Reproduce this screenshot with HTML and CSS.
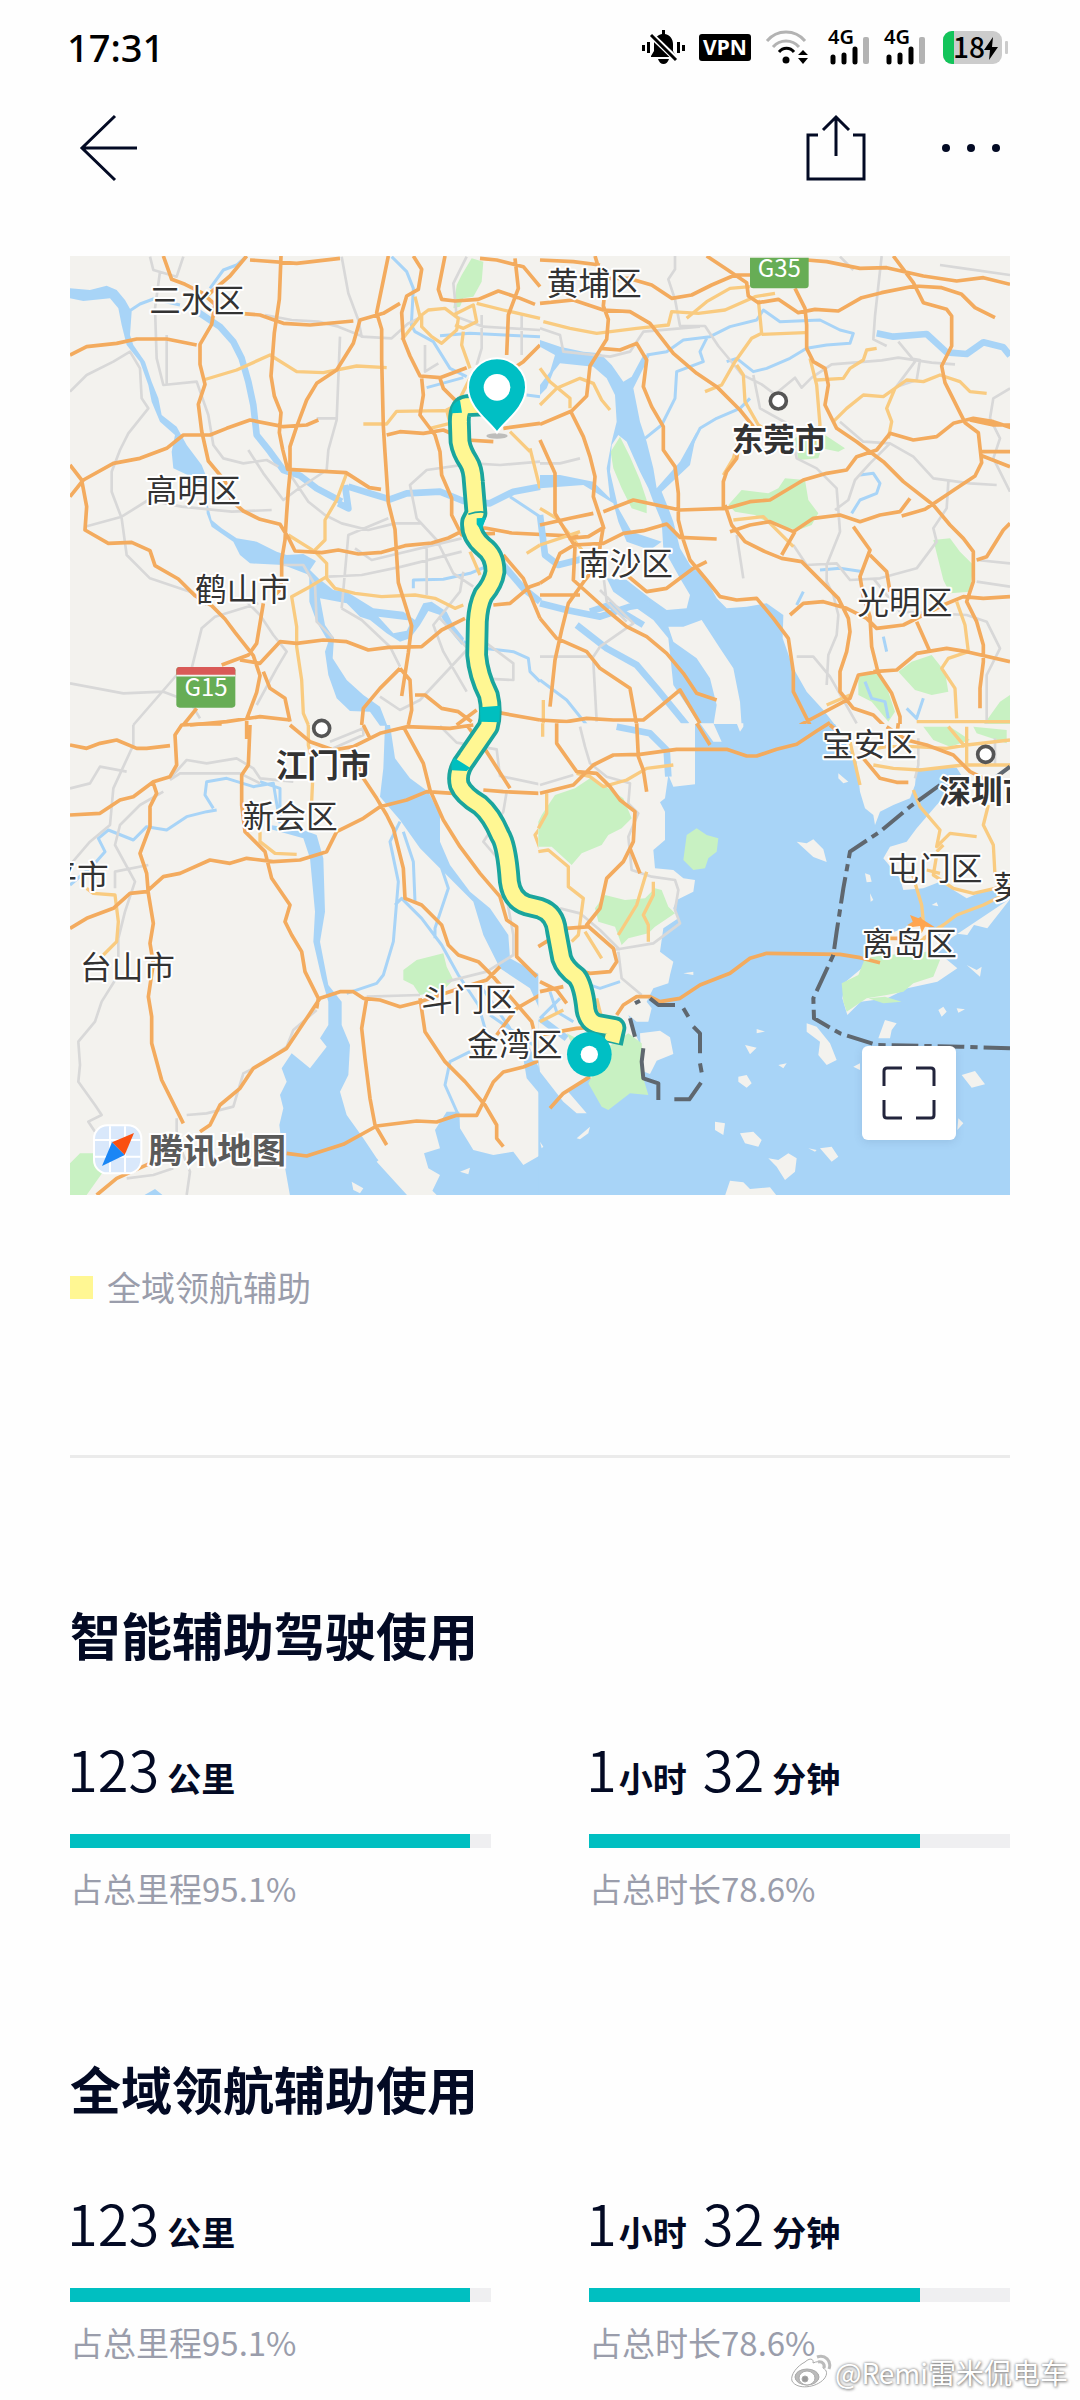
FILE: index.html
```html
<!DOCTYPE html>
<html lang="zh-CN">
<head>
<meta charset="utf-8">
<meta name="viewport" content="width=device-width, initial-scale=1">
<title>智能辅助驾驶使用</title>
<link rel="stylesheet" href="styles.css">
</head>
<body>
<div class="page">
  <div class="status">
    <span class="status-time">17:31</span>
    <div class="status-icons">
      <svg width="44" height="36" viewBox="0 0 44 36" aria-hidden="true">
        <g fill="#000"><path d="M21 1h3v4c5 1 8 5 8 10v7l3 5v1H10v-1l3-5v-7c0-5 3-9 8-10z"/><path d="M17 30h11c-1 3-3 5-5.500 5S18 33 17 30z"/></g>
        <path d="M9 5l27 26" stroke="#fff" stroke-width="6"/>
        <path d="M10 6l25 25" stroke="#000" stroke-width="3"/>
        <path d="M2.500 16v6M7.500 13v11M37.500 13v11M42.500 16v6" stroke="#000" stroke-width="3"/>
      </svg>
      <svg width="52" height="36" viewBox="0 0 52 36" aria-label="VPN"><rect y="5" width="52" height="27" rx="3"/><text x="26" y="26" class="vpn">VPN</text></svg>
      <svg width="49" height="36" viewBox="0 0 49 36" aria-hidden="true" fill="none" stroke-width="3">
        <path d="M2 12c10-12 28-12 38 0M8 18c7-8 19-8 26 0" stroke="#b3b3b3"/><path d="M14 23c4-5 11-5 15 0" stroke="#000"/>
        <circle cx="21" cy="31" r="3.500" fill="#000"/><path d="M38 21l5 5H33zM38 35l5-6H33z" fill="#000"/>
      </svg>
      <svg width="42" height="36" viewBox="0 0 42 36" aria-label="4G"><text x="0" y="15" class="net">4G</text><path d="M5 28v5M16 26v7M27 20v13" stroke="#000" stroke-width="5" stroke-linecap="round"/><rect x="35" y="8" width="6" height="27" rx="2" fill="#b3b3b3"/></svg>
      <svg width="42" height="36" viewBox="0 0 42 36" aria-label="4G"><text x="0" y="15" class="net">4G</text><path d="M5 28v5M16 26v7M27 20v13" stroke="#000" stroke-width="5" stroke-linecap="round"/><rect x="35" y="8" width="6" height="27" rx="2" fill="#b3b3b3"/></svg>
      <svg width="68" height="36" viewBox="0 0 68 36" aria-label="18%">
        <rect x="3" y="2" width="59" height="33" rx="9" fill="#ccc"/><path d="M14 2h-2a9 9 0 0 0-9 9v15a9 9 0 0 0 9 9h2z" fill="#13c45a"/>
        <rect x="65" y="12" width="3" height="13" rx="1" fill="#ccc"/><text x="13" y="29" class="battery">18</text><path d="M53 8l-9 13h6l-1 10 9-13h-6z"/>
      </svg>
    </div>
  </div>

  <header class="topbar">
    <button class="icon-button" type="button" aria-label="返回">
      <svg width="60" height="70" viewBox="0 0 60 70" fill="none" stroke="#030a24" stroke-width="3"><path d="M36 3L3 35l33 32M3 35h55"/></svg>
    </button>
    <div class="topbar-actions">
      <button class="icon-button" type="button" aria-label="分享">
        <svg width="62" height="70" viewBox="0 0 62 70" fill="none" stroke="#030a24" stroke-width="3"><path d="M13 22H3v44h56V22H48M31 43V4M18 17L31 4l13 13"/></svg>
      </button>
      <button class="icon-button" type="button" aria-label="更多">
        <svg width="62" height="70" viewBox="0 0 62 70" fill="#030a24"><circle cx="6" cy="35" r="4"/><circle cx="31" cy="35" r="4"/><circle cx="56" cy="35" r="4"/></svg>
      </button>
    </div>
  </header>

  <main>
    <div class="map">
      <svg class="map-canvas" viewBox="0 3 2820 2817" role="img" aria-label="行程路线地图">
        <rect width="2820" height="2820" class="land"/>

        <!-- north-west -->
        <g>
          <path class="water" d="M0 100L60 105 110 92 140 105 165 135 185 170 180 240 190 270 225 320 245 380 265 430 275 480 320 515 350 570 395 630 415 680 412 745 425 795 455 820 500 850 560 860 620 890 650 900 700 897 738 918 720 945 745 970 790 1005 830 1010 870 1035 910 1060 1000 1070 1035 1095 1060 1045 1085 1040 1130 1070 1150 1110 1182 1150 1175 1170 1150 1140 1110 1080 1075 1068 1050 1110 1020 1150 990 1160 950 1135 900 1095 870 1085 830 1045 750 1030 765 1110 792 1150 788 1210 830 1275 880 1320 930 1355 952 1412H930L900 1370 840 1368 800 1330 775 1260 765 1190 775 1160 740 1100 718 1040V960L640 930 540 925 510 900 490 860 425 815 410 775 408 700 370 668 310 640 305 590 315 540 270 500 245 440 235 390 210 320 170 270 155 210 145 160 120 130 40 138 0 130z"/>
          <path class="land" d="M925 1085l100 12-15 30-40 8z"/>
          <path class="river r12" d="M175 170L210 147 250 132 330 150M530 3L500 30 460 45 420 100M965 5l45 45 20 50-6 110 11 20 55 30 50 80 50 25M1110 242l90-7 210 10M1030 1000v-25l90-2 80-18 60-25M1180 1160l60 20 90 10 45 20 5 40 30 30M1070 398l110-30M1370 420l40 5M1320 725l90 60"/>
          <path class="river r22" d="M385 172L450 215 490 260 515 310 535 380 550 450 560 540 600 590 640 645 690 662 740 700 815 740M835 695l65 20 60 18 50-18 100-5 70 28 80 7 70-35 80-15M1300 930l60 70 50 40M825 690l10 70-30-15"/>
          <path class="park" d="M1205 10l35 10-5 60-25 45-30 5-10 25-20 5 10-70 15-30z"/>
          <path class="minor" d="M240 5l10 40 70 20 20-60M270 50l-15 110 5 150 20 80 100-10 35 100 15 90 30 40 60 15 70-10 35 20M290 240v150M0 410l50-50 80-40 50-30 30 50 5 90 20 30-60 75-25 50-25 65v60l30 80 15 110 70 70 120 40 50 40M45 815l110-30 80-50 100 20 150 15 120-5M815 5l20 110 30 80 10 50 90 5 50-45 40-20M880 245l-75-30-60-15-80-5-80-15M810 245l-10 250-25 90-5 60-90 60-40 30-60-80-45-70M740 490h60M655 650l60 90 50 40 50 25 80 20 80-20h80M1190 5l-40 80 10 100 80 30 170 10M1235 180v100l-15 50M1355 180v120M1065 270v80l40-25M1410 620l-120 10-80-5-140 20-50 45 20 100 60 65 50 100 60 40M815 1060l20-220 120-50M815 1060l60 35 85 80 30 60M855 880l50 35 270-65M775 965l100-5 120-25 180-45M640 930h60l35 60 5 110 50 50M520 1030l50 50 40 60 40 50-30 50-60 110M365 1240l30-120 40-35 130-40M0 1285l160 30 120-5 80 30 30 50M430 1240l-110 20-130 150M930 1325l60 40 60-30 140-150 60-20 80 60v50l-100-5M1110 1090l110 120M1070 880v140M1180 950l-10 60-80 100 30 80 70 120"/>
          <path class="second" d="M400 375l100-30 100-45 80 50 80 3 100-20 90 5M880 507h70l30-38 140-2 80 10M655 840l80 50 35 35v45l25 30 60 15 80 10 100-5 60 10 60 30 25-10M830 655l-30 80-35 60v60l-30 30M770 965l-50 30-55 30 15 90v60l15 100 5 100 15 35M1055 180l20-15 50-5 40 30-5 35-45 40-30-20-30-30zM1150 180l60-30 10 50-40 20-25-10M1180 230l-5 40 25 70M1220 145l80 20 110 25M1035 125l15 60-55 70M1410 870l-40 25M1380 580l30 120M1320 530l60 60M1200 370l-40 80-30 15 10 40-60 15M1200 890l30 70"/>
          <path class="major" d="M280 3l25 70 40 15 50 25 40 35-10 60-35 60v60l15 60-20 60 10 80 20 90 50 60 20 60 35 30 50 25 60 15 25 40 20 40 80 5 50-8 60 12 70-5 70-20 80-8 50-15 50-25 60-5 80 15 200 10M0 300l50-25 90-10 60-13h90l90 18M530 3l-50 60-70 60M540 15l140 10 130-15M633 3l-5 130-15 100-10 130 10 60 20 50-5 60 10 50 15 60 175 10 70 45 35 5M510 175l60 5 70 25 80 5 130-12M955 3l-35 170 15 50v90l5 200 5 80 10 150 20 80 10 160 25 80 15 50-10 80-20 130M990 145l-50 30-70 20-20 70-50 80-60 40-30 50-30 80-20 60v80l-5 50-5 70-5 80-10 60v60l-5 30-20 20M0 725l40-50 90-50 80-15 80-30 50-40h80l50-20 70-25 100 20 70-5 35-15M0 630l35 45 15 80-5 70 70 40 70-3 55 25 15 45 70 40 50 50 50 30 40 40 30 40 55 70 20 60-10 50-30 80v60M455 1230l80-30 25-35 20-120M510 1215l60 10 60-65 50 5 80-10 70 5 65 25 60-8 100-2 60-50 70-35M360 1410l110-10 100-15 90 10M580 1250l20 50 45 30 15 70M340 1410l40-50M1030 3l25 40-10 60-35 20-15 50 5 80 20 50 30 60 60 5 80-30M1125 3l-20 100 10 30 40 5 70-5 60-25 60 20 50 20M1410 95l-50-60-80-20-50-5M1310 300l5-120 30-80-10-90M1410 270l-50 50-30 20M950 540l40-10 70 5 60-10 70 30 80 5M1055 370l5 50-10 60 45 60 15 50 5 70 30 70v50l30 60 100-5M1110 370l10 30 40 40M1300 520l110-15M990 1240l30 35 5 90-10 45M990 1240l-60 60-50 60-5 50M1035 1320h30l50 40 50 10 40 30M1270 1370l140 25M1160 1410l60-45M1300 900l60 70 50 120M1270 1050l50-5 60-50 30-10"/>
        </g>

        <!-- north-east -->
        <g transform="translate(1410 0)">
          <path class="water" d="M0 255L60 275 130 290 180 295 215 330 250 380 275 365 310 300 330 300 280 400 300 500 320 560 340 640 350 700 420 620 470 530 450 630 365 710 385 760 400 800 420 880 450 930 500 975 530 1030 560 1060 620 1055 680 1045 730 1080 728 1150 760 1240 800 1310 850 1365 887 1412H605L600 1340 580 1240 540 1180 485 1095 430 1115H385L400 1160 470 1210 510 1270 530 1350 520 1412H480L440 1350 400 1290 385 1150 340 1095 290 1060 220 1010 200 970 260 975 330 1030 380 1065 440 1060 450 1020 420 970 370 880 365 800 340 740 325 700 300 650 260 560 235 540 215 570 210 650 235 760 275 830 365 860 330 885 260 860 235 800 220 745 130 690 0 700V660L60 660 160 680 210 730 200 640 215 560 230 500 225 420 200 370 160 335 60 325 40 350 20 400 0 420V390L30 350 45 300 0 275z"/>
          <path class="river r12" d="M320 300l60-10 50-35 80-10 60-30 80-20 20-30 50 35 120-5 60 30 40 10-10 30-70 5-60 10-50 30-70 30-40 10-50-40-30 10M500 250l-20 40 10 30-80 30-5 80-40 80-50 40M450 580l30-60 50-30 70-30 30-30M935 775l25-40 50-20 10-30-20-30-40 5M840 945l60-5 70 10M790 1010l-20 40M0 1275l80 60 60 75"/>
          <path class="river r22" d="M1010 235l50 10 100-8 60 55 60 5 50-35 60 15 20 25M0 1045l80 20 100 20 90-30 60-10M110 1110l90 70 90 50 60 70 90 110M0 780l15 120 40 30 80-20M150 1070l60-20 100 60"/>
          <path class="park" d="M240 545l30 60 30 70 20 60v40l-45-15-30-60-25-60-8-50zM565 750l40-45 80 10 30-15 20-30 60 5 10 60 30 40-20 35-40 15-80-15-50-30-60-10zM765 550l30-20 60 10 60 40-20 10-50-10-10 30-60 5zM1180 855l50-5 30 40 40 40-10 80-60 5-20-40zM1075 1250l40-30 60-20 40 50 10 60-50 10-50-15zM955 1260l60-10 30 60 20 60-20 30-50-60-40-20zM1330 1410l50-70 30-20v90z"/>
          <path class="river r12" d="M975 1280l20 50 40 10 10 50M1030 1145l10 45M1100 1360l30 30 20-60"/>
          <path class="minor" d="M405 3v40l-20 30 20 60 15 80h75l40 60 50 60 20 25 60 30 40 30 60-50 20 30 30-30 60-40 150-12 50-8 100 15 70 5M640 360l20 100 90 50 20 100 60 30 60 60 10 130-40 100v50l20 40 15 60-5 60-25 60-5 90M0 220l60 20 10 50 140 15 60-15 40-60 170-15M1025 3l-20 180-5 70 40 20M1110 310l30 5-10 60-60 20M1075 260l50 60-60 80M900 500l70 60 80 5 70 40 60 65 110 15 80 5M1050 565l-60 60-45 50-20 60-40 30M1225 680l-5 80-40 60 10 40-60 80-110 30-90 5-40-50-90 5-40-60M1200 30l70 10 140 20M900 5l40 40M0 625h60l60-15M0 1205h160l20-30 100-70-100-100M190 960l10 80 60 60M160 1220l10 180M770 1205h50l50 60 80 140M1000 970l80 100 200 10 60 20 40 80-40 80v150M590 840l20 130M1410 400l-50 30-10 60 30 60-20 60 30 60 20 40M1310 915l100 10M1310 980l100 15"/>
          <path class="second" d="M10 200l80 20 80 15 120-15 95-10 10-40 80 5 80-10 90-40 60-10M440 190l60-50 70-40 60-5M655 135l10 100-30 15-50 70-40 70-50 20M665 238l130-5M590 330l20 30 5 80 40 70 80 50M810 310l20 80 10 120-20 60M830 375l80-5 20-30 40-25 10-30 30-5M880 500l40-40 50-40 60 5 70-50 50 5 50-20 60 20 30 30 50 5M1065 400l-25 60 15 40-10 50M0 340l30 40 60 50v30M0 450l50-50 70-30 40 15 25 50 25 30M0 870l120-40M0 760l50 30 80 100M580 795l90-10 60 60 30 30M1250 1040l25 70 10 80-60 20-20 30 40 60 5 90M860 1350l70-30M1130 1400h280M10 1335v75M550 660l30-50 20-70"/>
          <path class="major" d="M0 15l100 5 80 10M165 3l30 100-5 50 15 40-5 60-50 80-10 90-45 45-95 40M0 145l100-10 90 30 80 5 60 35 70 90 70 60 60 40 70 70 40 50M205 70h60l70 20 60 40 60-10 60-30 70-30h50M500 3l60 40 60 40 5 40 30 20 60-10 60 40 50-10 70 5 70-40 60-15 100-20 80 5 60 20 40 40 60 30M800 15l60 5 100 20 80-2 110 25 100 15 80-10 80 20M1060 3l60 80 30 60 70 20 15 20v90l-30 60 10 50 60 120 40 30 10 90-20 40-60 40-30 20-60 40-70 20M765 100l30 60 5 50v70l20 40 35 20 10 50-10 60 35 70 60 40 80 60 60 60 90 70 50 60 40 40 30 40v90l-20 60 30 60 20 70v50l-10 80v60M550 760v-80l10-30 30-40 10-60M180 280l60 5 50-20 30 50-10 80 25 60 35 60v70l35 50 10 80v80l15 60 20 60 50 60 40 50 50 10 60-5 50 60 45 60 15 100v60l50 100 60 60M0 555l45 100v120l60 100-5 100 100 90 60 50 60 30 60 50 50 60 40 60 60 20M90 465l40 80 20 60 15 60-5 60 30 90-10 60-5 50-40 50-50 70-20 80-20 90-15 140M0 810l90-20 70-15M190 770l90-35 140 30 140-5 70-20 60-5 50-30 50-30 70-20 60-10 30-40 60-20 40-50 70 20 70-10 50-40 60-15 60 10 60 20h60M555 750l20 60 40 50 60 30 50 20 60 10 60 60 50 50 30 60 5 40-10 60-20 60v60l40 50 60 20 60 60M570 830l60-20 60-10 70 30 60-40 80-10 60 20 60-20 60-10 30-40M765 830l-40 70M750 1080l40-35 60-5 70 20 60 30 30 30 80-10 60-30 60-30 60-25 60 5 80-5M940 815l50 70-30 80 10 60 20 60 5 90 20 80 40 60 25 70v25M1000 1250l70-5 60-50 90-15 60 10 130 30M1130 1100l40 90M990 900l50 50 10 60M780 1410l150-80 25-70 60-10M85 850l60-5 50-30M100 870l90-5 60-30 60-8 70-20 40 40 110 5M0 985l30-20 30-70 50-30M0 1020h120M260 960l60 50 60-10 80-60 40-20M0 1090l50 60 90 40 40 50 90 60 20 110M0 1395l80 5 60-10 80 5h90l50-40 60-50 60 100M1310 915l30-10 50-80 20-20M1320 590h90M1320 600l90 35M1290 495l70 15h50"/>
        </g>

        <!-- south-west -->
        <g transform="translate(0 1410)">
          <path class="river r12" d="M0 480l70-60 35-40-20-40 30-25 75 30 40-40 60 10 60-40 60-15 30-5M430 250l-25-40 5-40 60-10 80 25 60-10 20 120M570 170l60 20v100M990 290l-30 60 25 120-15 180-30 100-20 25-90 30M1000 320l30 90 5 120M975 540l20-20 60 60 60 80 50 90 60 90 20 70M1115 430l20 60-40 120v30M1200 980l-60 30-15 70 40 90M1260 870l130 90M1230 780l90 130"/>
          <path class="water" d="M600 300L700 315 740 330 760 400 765 560 750 650 775 780 815 830V900L840 960 835 1050 810 1100 830 1170 880 1240 920 1300 1000 1390 1020 1412H660L640 1300 628 1200 640 1150 630 1110 650 1070 635 1030 665 985 720 1030 770 965 750 940 775 900V830L755 760 730 650 735 560 720 400 700 340 600 312zM945 0h15L975 100 1020 160 1075 200 1110 270V350L1140 420 1200 500 1260 550 1315 630 1320 700 1412 750V860L1380 790 1290 730 1240 630 1210 530 1100 420 1050 370 990 285 930 215 940 130zM1062 1285L1110 1270 1095 1215 1130 1160H1168L1170 1210 1210 1275 1270 1290 1330 1280 1360 1320 1412 1290V1412H1080L1110 1350 1075 1330zM1350 940L1380 970 1412 1040V1110L1370 1060zM220 1412l35-20 25 20z"/>
          <path class="land" d="M920 1310l30-25 60 105 60-10 40 40h-90zM845 1370l35 20-10 15-20-10zM1170 1340l30-12-5 20z"/>
          <path class="park" d="M1000 735l40-30 80-20 10 40 20 40-30 30-70 15-20-30-30-15zM0 1315l30-30h60l20 40-60 85H0z"/>
          <path class="minor" d="M190 0v60l-60 130-10 110-60 50-60 70M0 190l60-15 30-50 80 15M300 160l50-55 60 10 90-15 50 30 20 30 100 10M300 165l30-20h180l60 30M280 200l-70 40-60 60-15 60 60 110-30 90-20 80v110l-50 80-20 60-50 60 5 70-5 50 50 70 20 30-40 20 20 30M135 490v-50l100-20M350 1170l60-5 80-20 30-100 60-30 70-50 20-50 70-60M320 1180v60l40 100-10 70M170 1360l80-10 60-20M890 815l160-5M1130 770l120-30 80-50v-60l-20-110M1110 3l50 50 120 20 10 80 120 25M1310 200l-10 60-60 90 60 70M780 50l100-40v20l-90 40"/>
          <path class="second" d="M715 0v60l15 60-5 110M50 490l20 15 65 5 10 80-5 60-40 40M570 320v30l45 35 65 3M1410 310l-15 20 15 40"/>
          <path class="major" d="M0 60l50 10 40-15 50-10 60 25h30l70-8M0 270l90-5 60-40 40-10 60-45 50-15 20-35-5-90 20-30 60-3h60M250 175l10 30-20 40v60l-30 80 20 60 5 60 15 90-10 60 10 60-15 100 10 60v80l30 110 65 130M0 610l50-30 80-30 50-45 50-5 50-45 50-10 90-40 60 10 50-15 80 10 80-5 80-25 30-60 80-40 50-35 80-20 60-25 80 5M540 0l-5 120-20 30v90l10 80 60 60 20 80 55 80-15 50 20 40 30 50 10 60 40 80-5 30M660 0l60 50 70 25 60-10 80-40 80-20 130 5 70-10M880 0l20 40M850 70l30 90 40 60 30 50 20 40 30 120 5 90 50 20 60 60 20 60 30 30 60 20 40 40 60 70 60 70 20 80 30 20M1000 5l60 110 20 80 40 90 50 80 60 80 60 70 20 70 30 20v90l60 60M390 1220l30-20 30-60 60-50 40-60 100-60 40-60 60-90 60-20h40l30 20 50 5 60 20 60-15 60-20 60-20 80-25 40-40M1410 810l-70 40-60 80M80 1410l60-50 100-45M650 1285l60 8 110-35 100-55 120-15 60 3 60-20h60l50-100 30-30 60-15 50-20M890 820l-15 90 10 90 15 120 15 80 35 60M1050 820l15 100 60 90 60 60 60 70 35 60v40l20 25M1190 0l60 80 70 110M1240 195l60 5 110 5"/>
        </g>

        <!-- south-east -->
        <g transform="translate(1410 1410)">
          <path class="water" d="M-5 880L100 900 180 900 480-3H1415V1415H-5V1050z"/>
          <path class="water" d="M330-3H1415V1415H330z"/>
          <path class="land" d="M-5-5H465V178L400 185 385 150 375 220 360 232 375 260V345L340 375 345 430 400 435 430 460 465 465 460 500 410 525 400 550 415 580 370 610 360 680 400 710 390 750 385 775 340 790 320 830 335 850 325 890 290 890 265 870 300 960 310 1060 200 1100 150 1060 80 1095 140 1165 110 1165 70 1130 0 1040 -5 1000z"/>
          <path class="river r22" d="M230 5l100 20 50 50 5 80M0 880l80 60"/>
          <path class="river r12" d="M0 880l60-60M30 800l20 60 50 30M120 770l60 20 60-20"/>
          <path class="land" d="M480-5l40 55h25L520-5zM590-5l10 25 10-15V-5zM885-3L920 60 950 110 960 200 975 250 1000 270 1005 300 1020 260 1060 240 1110 220 1125 180 1130 130 1250 128 1270 160 1190 240 1130 310 1100 350 1050 365 1030 400 1080 460 1090 495 1150 490 1200 470 1280 520 1350 490 1412 520V-3zM1412 520l-70 90-40-10-20 30-80-10-10 60 60 50-60 40-90 20-60 30-80 10-40 40-15-50 10-50 60-50 20-50 40-40 80-30h40l60 50z"/>
          <path class="land" d="M770 350l30 5 20-12 30 30 10 38-40-15zM975 445l15 5 5 20-15 2zM895 145l30 25-15 5-15-15zM800 895l30 10 40 50 20 50-30 15-25-30 5-40-40-30zM1015 940l20-55 35 10-15 20-5 25zM300 925l60-8 30 20 10 50-50 20-20 40-25-10zM615 960l35 8-20 20zM595 1055l25-5 15 25-15 13-25-18zM650 912l25 8-25 5zM600 1225l40-5 25 25-10 20-40-10zM685 1300l30 5 30-20 25 15-5 40-30 25-25-40zM555 1412l15-45 40 5 20 20 60-5 20 25zM840 1270l35-5 20 30-20 15zM805 1270l25 5-5 5zM525 1190l30 5-5 35-25-15zM1265 1050l40-12 30 40-40 10zM1280 720l30 15 15-10-5 30zM1195 855l15-10 10 15-15 15zM940 1025l20-10v20zM715 1020l25-5-10 15zM110 1240l40-35-5 20-25 18zM0 1250l10 15-5 5zM1255 1180l15 15-18 20zM1250 850l25 3-20 10zM1175 540l15-8 5 12zM990 505l10 20-8 5zM430 745l30-5v10z"/>
          <path class="park" d="M5 270l40-60 60-20 45-30 40 20 60 40 25 60-30 30-40 20-20 30-60 25-30 35-60-55L-5 365V290zM440 330l30-20 30 20 35 10-5 40-25 20-10 30-35 5-30-30zM165 550l30-40 60 15 60-5 30-30 20 5 20 50 20 20-60 40-20 20-60 15-20 20-20-55-50-15zM905 775l50-25 20-50 60-10 100-5 50-10 15 30-20 50-60 20-30 25-50 10-60 10-60 40-10-30zM1085 830l-50-15-50 5 45 15zM265 925l40 30 5 105 15 50-55-5-65 50-20-10-40-70 60-110zM1150 5h80l60 40-60 20-50-20zM1300 5l100 10v40l-90-30zM80 925l40 20-20 20z"/>
          <path class="minor" d="M120 5l15 60 15 50 50 40 70 20-5 60 30 30-30 70 10 100 60 20 70 10 10 30-10 60 15 40-80 60-120 20M235 680l10 80 60 50M0 180l100-30M60 550l60 15 60 50 60 60M1135 40v80l-10 40M1365 40v80"/>
          <path class="second" d="M400 120l-80 10-60 35-70 20-40-30-40-10M20 205v60L-5 310M-5 380l30-5 60 50v60l45 35-15 110-20 20M320 440l-30 100-55 90M340 470v40l-30 60 15 30v50M135 620l50 80M170 820l15 60M0 890l70-35M930 50l30 130M980 75l60-10h80l100 5 60-10 130-15M1000 120l60 10 80 5 130-15h140M1120 195l20 50 60 70-10 50 40-40 80 10M1190 380l20-20M1345 240l-15 60 30 60 5 90M1115 440l30 100 5 50M1190 390l-10 60 60 40 60 15 110-25M1150 640l60-40 40-30 80-30 80-40M1225 5l50 60M1280 5v120M1140 650l60-45M8-5v40M1160 435l40 10"/>
          <path class="major" d="M50-5v60l60 85 60 5 40 40 30 40 45 35-5 90-30 60-50 50-20 90-40 50 80 70 10 40-20 30-60 5-40-10M0 205l100-25 60-60 60-30 80-2 110-15h90l60 0 60 20h30l60-20 60-15 60-40 40-25M290-5l5 100 15 40 10 65M470-5l40 65M270 370l30 75M80 610l70-5M-5 665l40-25M0 800l70-15M0 770l50 25 30 40M0 930l110-20 80-5M230 870l20-30 40-25h40l30 15 60-10 60-40 90-35 60-45 50-15 220 3 60 10 60 15M1050 640h50M870 0l60 50M970 100l50 60 50 12h35M1040 5l60 40 60 15 80 30 50 50 60 30M1075-5l-5 40M150 1055l-80 50-40 45M1105 605l40-25"/>
          <path d="M1110 570l40 15 35 22-30-2-10 20-5-22-40 5 20-13z" fill="#ffa54f"/>
          <path d="M1410 125l-40 30M1200 180l-90 65-90 75-90 60-20 110-20 130-10 70-60 130 2 60 78 45 110 35 250 5 150 5" class="border"/>
          <path d="M270 880l15 55M310 970l-5 40 5 50 45 15v50M285 835l15-8M330 820l25 20h50M430 850l15 25M460 905l20 20v60M480 1015l5 27M483 1073l-35 50h-45" class="border solid"/>
        </g>

        <g class="route">
          <path class="route-edge" d="M1240 450L1190 452Q1168 455 1168 500L1170 560Q1175 590 1195 620 1208 640 1210 680L1218 775 1205 800Q1200 840 1240 875 1275 900 1275 950 1270 985 1240 1020 1225 1050 1222 1100L1220 1200Q1225 1260 1255 1320 1267 1370 1255 1415L1190 1510Q1158 1550 1168 1590 1180 1620 1230 1650 1265 1680 1290 1740 1310 1770 1318 1880 1325 1935 1370 1950L1410 1960Q1455 1975 1460 2030L1475 2110Q1485 2140 1520 2165 1540 2190 1548 2265 1555 2305 1590 2310L1635 2318 1625 2365"/>
          <path class="route-line" d="M1240 450L1190 452Q1168 455 1168 500L1170 560Q1175 590 1195 620 1208 640 1210 680L1218 775 1205 800Q1200 840 1240 875 1275 900 1275 950 1270 985 1240 1020 1225 1050 1222 1100L1220 1200Q1225 1260 1255 1320 1267 1370 1255 1415L1190 1510Q1158 1550 1168 1590 1180 1620 1230 1650 1265 1680 1290 1740 1310 1770 1318 1880 1325 1935 1370 1950L1410 1960Q1455 1975 1460 2030L1475 2110Q1485 2140 1520 2165 1540 2190 1548 2265 1555 2305 1590 2310L1635 2318 1625 2360"/>
          <path d="M1145 475q-2-32 25-40l6 38zM1230 1357l60-5-2 50-57-2zM1152 1508l48 30-10 10-44-2q-6-16 6-38zM1220 790l28-2-14 40-14-20z" fill="#00bfbf"/>
          <path d="M1195 778q30-10 50-6" fill="none" stroke="#1aa59d" stroke-width="5"/>
        </g>
        <ellipse cx="1281" cy="543" rx="32" ry="8" fill="#888" opacity=".5"/>
        <path d="M1281 533C1260 500 1194 460 1194 397a87 87 0 0 1 174 0C1368 460 1302 500 1281 533z" fill="#00bfc4" stroke="#fff" stroke-width="6"/>
        <circle cx="1281" cy="397" r="40" fill="#fff"/>
        <circle cx="1558" cy="2398" r="67" fill="#00bfc4"/><circle cx="1558" cy="2398" r="26" fill="#fff"/>

        <g class="town"><circle cx="2125" cy="438" r="24"/><circle cx="755" cy="1420" r="24"/><circle cx="2747" cy="1498" r="24"/></g>

        <path d="M2040 8h176v82q0 10-10 10h-156q-10 0-10-10z" fill="#67ad55"/><text class="shield" x="2128" y="66">G35</text>
        <rect x="319" y="1236" width="177" height="122" rx="10" fill="#67ad55"/><path d="M319 1260v-14q0-10 10-10h157q10 0 10 10v14z" fill="#d95a57"/><path d="M319 1262h177" stroke="#f3f2ee" stroke-width="5"/><text class="shield" x="408" y="1324">G15</text>

        <g class="place">
          <text x="238" y="172">三水区</text><text x="227" y="741">高明区</text><text x="375" y="1038">鹤山市</text>
          <text x="1430" y="120">黄埔区</text><text x="1524" y="960">南沙区</text><text x="2362" y="1078">光明区</text>
          <text x="518" y="1719">新会区</text><text x="-74" y="1898">平市</text><text x="30" y="2173">台山市</text>
          <text x="1054" y="2268">斗门区</text><text x="1192" y="2403">金湾区</text><text x="2256" y="1504">宝安区</text>
          <text x="2452" y="1874">屯门区</text><text x="2376" y="2099">离岛区</text><text x="2770" y="1933">葵青区</text>
        </g>
        <g class="place city"><text x="1985" y="587">东莞市</text><text x="617" y="1567">江门市</text><text x="2608" y="1645">深圳市</text></g>

        <rect x="72" y="2611" width="142" height="144" rx="40" fill="#d9e8fb" stroke="#fff" stroke-width="6"/>
        <path d="M120 2614v138M75 2655h136M75 2705h136M165 2614v138" stroke="#fff" stroke-width="6"/>
        <path d="M192 2634l-28 66-38-38z" fill="#fa5010"/><path d="M96 2733l30-71 38 38z" fill="#1a86f5"/>
        <text class="brand" x="236" y="2724">腾讯地图</text>
      </svg>
      <button class="map-expand" type="button" aria-label="全屏查看地图">
        <svg width="54" height="54" viewBox="0 0 54 54" fill="none" stroke="#22243c" stroke-width="3"><path d="M2 20V5q0-3 3-3h15M34 2h15q3 0 3 3v15M52 34v15q0 3-3 3H34M20 52H5q-3 0-3-3V34"/></svg>
      </button>
    </div>

    <p class="legend"><span class="legend-swatch"></span>全域领航辅助</p>
    <hr class="divider">

    <section class="usage">
      <h2>智能辅助驾驶使用</h2>
      <div class="stats">
        <div class="stat">
          <p class="stat-value">123<span class="unit">公里</span></p>
          <progress value="95.1" max="100" aria-labelledby="a1"></progress>
          <p class="stat-note" id="a1">占总里程95.1%</p>
        </div>
        <div class="stat">
          <p class="stat-value">1<span class="unit tight">小时</span><span class="second-value">32</span><span class="unit">分钟</span></p>
          <progress value="78.6" max="100" aria-labelledby="a2"></progress>
          <p class="stat-note" id="a2">占总时长78.6%</p>
        </div>
      </div>
    </section>

    <section class="usage">
      <h2>全域领航辅助使用</h2>
      <div class="stats">
        <div class="stat">
          <p class="stat-value">123<span class="unit">公里</span></p>
          <progress value="95.1" max="100" aria-labelledby="b1"></progress>
          <p class="stat-note" id="b1">占总里程95.1%</p>
        </div>
        <div class="stat">
          <p class="stat-value">1<span class="unit tight">小时</span><span class="second-value">32</span><span class="unit">分钟</span></p>
          <progress value="78.6" max="100" aria-labelledby="b2"></progress>
          <p class="stat-note" id="b2">占总时长78.6%</p>
        </div>
      </div>
    </section>
  </main>

  <div class="watermark">
    <svg width="42" height="36" viewBox="0 0 42 36" fill="#fff" stroke="#aaa" stroke-width="1"><path d="M14 8c4-4 9-4 8 1 7-3 12-1 10 5 4 2 5 6 1 11-8 9-27 11-32 2C-1 21 6 12 14 8z"/><ellipse cx="16" cy="23" rx="12" ry="8" fill="#bbb"/><ellipse cx="16" cy="24" rx="8" ry="7"/><circle cx="14" cy="25" r="3" fill="#999"/><path d="M26 3c8-3 15 4 12 12M27 8c5-1 7 3 6 6" fill="none" stroke="#bbb" stroke-width="3"/></svg>
    <span>@Remi雷米侃电车</span>
  </div>
</div>
</body>
</html>
```
FILE: styles.css
```css
* { box-sizing: border-box; }

body {
  margin: 0;
  background: #fefefe;
  color: #030a24;
  font-family: "Noto Sans CJK SC", "Noto Sans", sans-serif;
}

p, h2 { margin: 0; }

button {
  border: 0;
  padding: 0;
  background: none;
  cursor: pointer;
}

svg { display: block; }

.page {
  position: relative;
  padding: 0 70px;
  overflow: hidden;
}

/* status bar */
.status {
  display: flex;
  align-items: center;
  justify-content: space-between;
  height: 94px;
  margin: 0 2px 0 -3px;
}

.status-time {
  font: 500 38px/48px "Noto Sans", sans-serif;
  color: #000;
}

.status-icons {
  display: flex;
  gap: 14px;
}

.status-icons svg { overflow: visible; }

.vpn {
  font: 700 21px "Noto Sans", sans-serif;
  fill: #fff;
  text-anchor: middle;
}

.net { font: 600 20px "Noto Sans", sans-serif; }
.battery { font: 500 28px "Noto Sans CJK SC", sans-serif; }

/* navigation */
.topbar {
  display: flex;
  align-items: center;
  justify-content: space-between;
  height: 108px;
  padding: 0 8px 0 9px;
}

.topbar-actions {
  display: flex;
  gap: 73px;
}

/* map */
.map {
  position: relative;
  margin-top: 54px;
}

.map-canvas {
  width: 100%;
  height: auto;
}

.land { fill: #f3f2ee; }
.water { fill: #a8d4f7; }
.park { fill: #c8f1c2; }

.river, .minor, .second, .major, .border {
  fill: none;
  stroke-linejoin: round;
}

.river { stroke: #a8d4f7; }
.r12 { stroke-width: 9; }
.r22 { stroke-width: 20; }
.minor { stroke: #d8d8d8; stroke-width: 8; }
.second { stroke: #f9cb80; stroke-width: 10; }
.major { stroke: #f3ab5e; stroke-width: 11; }

.border {
  stroke: #5f676f;
  stroke-width: 12;
  stroke-dasharray: 80 18 22 18;
}

.solid { stroke-dasharray: none; }

.route path { stroke-linejoin: round; }
.route-edge { fill: none; stroke: #1aa59d; stroke-width: 68; }
.route-line { fill: none; stroke: #fff793; stroke-width: 45; }

.town circle { fill: #fff; stroke: #555; stroke-width: 11; }

.shield {
  font: 72px "Noto Sans CJK SC", sans-serif;
  fill: #fff;
  text-anchor: middle;
}

.place {
  font: 95px "Noto Sans CJK SC", sans-serif;
  fill: #333;
  stroke: #fff;
  stroke-width: 12;
  stroke-linejoin: round;
  paint-order: stroke;
}

.city { font-weight: 700; }

.brand {
  font: 700 103px "Noto Sans CJK SC", sans-serif;
  fill: #5a5a5a;
  stroke: #fff;
  stroke-width: 12;
  paint-order: stroke;
}

.map-expand {
  position: absolute;
  right: 54px;
  bottom: 55px;
  display: grid;
  place-items: center;
  width: 94px;
  height: 94px;
  border-radius: 6px;
  background: #fff;
  box-shadow: 0 2px 8px rgba(60, 90, 130, .15);
}

.legend {
  display: flex;
  align-items: center;
  gap: 14px;
  margin-top: 68px;
  font-size: 34px;
  line-height: 48px;
  color: #9a9dab;
}

.legend-swatch {
  width: 23px;
  height: 23px;
  background: #fff793;
}

.divider {
  height: 3px;
  margin: 144px 0 0;
  border: 0;
  background: #ebebeb;
}

/* usage */
.usage { padding-top: 144px; }

.usage h2 {
  font-size: 51px;
  font-weight: 700;
  line-height: 64px;
}

.stats {
  display: grid;
  grid-template-columns: 1fr 1fr;
  gap: 98px;
  margin-top: 70px;
}

.stat-value {
  margin-left: -3px;
  font-size: 56px;
  font-weight: 350;
  line-height: 64px;
  white-space: nowrap;
}

.unit {
  margin-left: 8px;
  font-size: 34px;
  font-weight: 700;
  line-height: 34px;
}

.tight { margin-left: 2px; }
.second-value { margin-left: 16px; }

progress {
  display: block;
  width: 100%;
  height: 14px;
  margin-top: 34px;
  border: 0;
  appearance: none;
  background: #efeff1;
}

progress::-webkit-progress-bar { background: #efeff1; }
progress::-webkit-progress-value { background: #00bfc1; }
progress::-moz-progress-bar { background: #00bfc1; }

.stat-note {
  margin-top: 16px;
  font-size: 33px;
  line-height: 48px;
  color: #9a9dab;
}

.usage:last-child { padding-bottom: 30px; }

.watermark {
  position: absolute;
  right: 12px;
  bottom: 4px;
  display: flex;
  align-items: center;
  gap: 2px;
  font-size: 28px;
  line-height: 40px;
  color: #fff;
  text-shadow: 0 0 3px #777, 1px 1px 3px #999;
}
```
